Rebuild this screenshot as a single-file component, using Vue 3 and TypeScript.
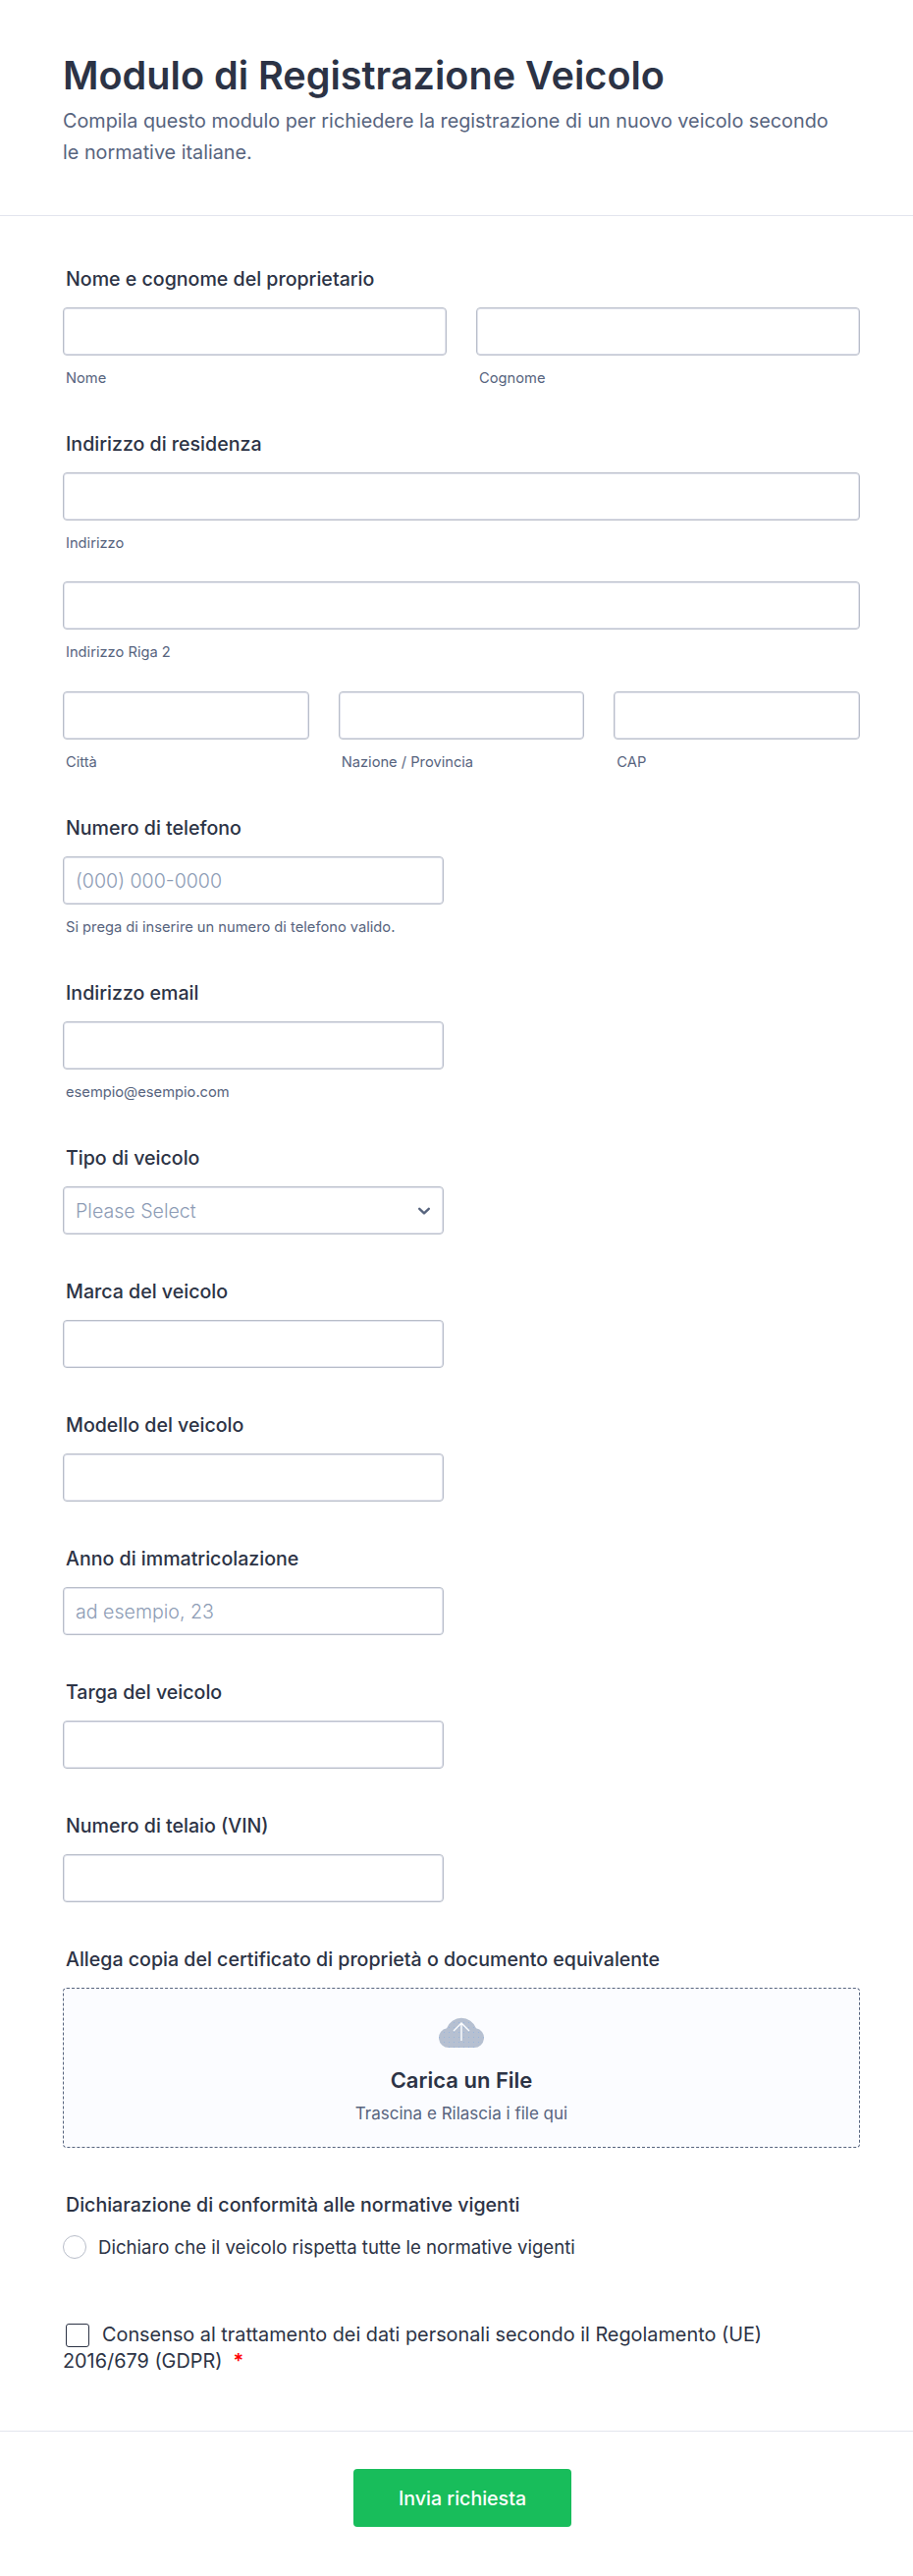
<template>
  <div class="form">
    <header class="form-header">
      <h1>Modulo di Registrazione Veicolo</h1>
      <p>Compila questo modulo per richiedere la registrazione di un nuovo veicolo secondo le normative italiane.</p>
    </header>

    <main class="form-body">
      <section class="field">
        <label class="label">Nome e cognome del proprietario</label>
        <div class="row two">
          <div>
            <input class="input" type="text" />
            <div class="sub">Nome</div>
          </div>
          <div>
            <input class="input" type="text" />
            <div class="sub">Cognome</div>
          </div>
        </div>
      </section>

      <section class="field">
        <label class="label">Indirizzo di residenza</label>
        <input class="input" type="text" />
        <div class="sub">Indirizzo</div>
        <input class="input stacked" type="text" />
        <div class="sub">Indirizzo Riga 2</div>
        <div class="row three stacked">
          <div v-for="part in addressParts" :key="part">
            <input class="input" type="text" />
            <div class="sub">{{ part }}</div>
          </div>
        </div>
      </section>

      <section class="field">
        <label class="label">Numero di telefono</label>
        <input class="input half" type="text" placeholder="(000) 000-0000" />
        <div class="sub">Si prega di inserire un numero di telefono valido.</div>
      </section>

      <section class="field">
        <label class="label">Indirizzo email</label>
        <input class="input half" type="text" />
        <div class="sub">esempio@esempio.com</div>
      </section>

      <section class="field">
        <label class="label">Tipo di veicolo</label>
        <div class="select half">
          <span>Please Select</span>
          <svg width="14" height="14" viewBox="0 0 14 14" fill="none">
            <path d="M2.2 4.800 7 9.400 11.800 4.800" stroke="#57647e" stroke-width="2.400" stroke-linecap="round" stroke-linejoin="round" />
          </svg>
        </div>
      </section>

      <section v-for="item in simpleFields" :key="item.label" class="field">
        <label class="label">{{ item.label }}</label>
        <input class="input half" type="text" :placeholder="item.placeholder" />
      </section>

      <section class="field">
        <label class="label">Allega copia del certificato di proprietà o documento equivalente</label>
        <div class="upload">
          <svg width="48" height="32" viewBox="0 0 48 32">
            <defs>
              <pattern id="cloud-dots" width="5" height="5" patternUnits="userSpaceOnUse">
                <rect width="5" height="5" fill="#b6c0d1" />
                <circle cx="1.500" cy="1.500" r="0.500" fill="#8fb2e0" />
              </pattern>
            </defs>
            <path d="M11 32A10 10 0 0 1 9 12.200A16 16 0 0 1 39 12.200A10 10 0 0 1 37 32Z" fill="url(#cloud-dots)" />
            <path d="M24 25V7M16 15 24 7l8 8" fill="none" stroke="#fbfcff" stroke-width="1.400" />
          </svg>
          <div class="upload-title">Carica un File</div>
          <div class="upload-hint">Trascina e Rilascia i file qui</div>
        </div>
      </section>

      <section class="field declaration">
        <label class="label">Dichiarazione di conformità alle normative vigenti</label>
        <div class="radio-row">
          <span class="radio"></span>
          <span>Dichiaro che il veicolo rispetta tutte le normative vigenti</span>
        </div>
      </section>

      <section class="consent">
        <div><span class="checkbox"></span><span>Consenso al trattamento dei dati personali secondo il Regolamento (UE)</span></div>
        <div><span>2016/679 (GDPR)</span><span class="required">*</span></div>
      </section>
    </main>

    <footer class="form-footer">
      <button class="submit" type="button">Invia richiesta</button>
    </footer>
  </div>
</template>

<script setup lang="ts">
interface SimpleField {
  label: string
  placeholder?: string
}

const addressParts: string[] = ['Città', 'Nazione / Provincia', 'CAP']

const simpleFields: SimpleField[] = [
  { label: 'Marca del veicolo' },
  { label: 'Modello del veicolo' },
  { label: 'Anno di immatricolazione', placeholder: 'ad esempio, 23' },
  { label: 'Targa del veicolo' },
  { label: 'Numero di telaio (VIN)' }
]
</script>

<style>
html,
body {
  background: #fff;
}
</style>

<style scoped>
.form {
  width: 930px;
  background: #fff;
  font-family: Inter, "Liberation Sans", sans-serif;
  color: #2c3345;
}

.form-header {
  height: 220px;
  box-sizing: border-box;
  padding: 53px 64px 0;
  border-bottom: 1px solid #e3e5ee;
}

.form-header h1 {
  margin: 0;
  font-size: 39.600px;
  line-height: 48px;
  font-weight: 600;
}

.form-header p {
  margin: 6px 16px 0 0;
  font-size: 19.800px;
  line-height: 32px;
  color: #57647e;
}

.form-body {
  padding: 52px 54px 57px 64px;
}

.field {
  margin-bottom: 46px;
}

.label {
  display: block;
  margin: 0 0 17px 3px;
  font-size: 19.600px;
  line-height: 24px;
  font-weight: 500;
}

.input {
  display: block;
  box-sizing: border-box;
  width: 100%;
  height: 49px;
  padding: 0 12px;
  font: 300 19.600px Inter, "Liberation Sans", sans-serif;
  color: #2c3345;
  background: #fff;
  border: 1px solid #b8bdc9;
  border-radius: 4px;
  box-shadow: 0 0 0 1px #e3e5ee inset;
  outline: none;
}

.input::placeholder {
  color: #8d9cb5;
  opacity: 1;
}

.half {
  width: 388px;
}

.stacked {
  margin-top: 30px;
}

.row.three.stacked {
  margin-top: 31px;
}

.row {
  display: grid;
  gap: 30px;
}

.row.two {
  grid-template-columns: 1fr 1fr;
}

.row.three {
  grid-template-columns: 1fr 1fr 1fr;
}

.sub {
  margin: 14px 0 0 3px;
  font-size: 14.700px;
  line-height: 18px;
  color: #57647e;
}

.select {
  display: flex;
  align-items: center;
  justify-content: space-between;
  box-sizing: border-box;
  height: 49px;
  padding: 0 12px;
  font-size: 19.600px;
  font-weight: 300;
  color: #8d9cb5;
  border: 1px solid #b8bdc9;
  border-radius: 4px;
  box-shadow: 0 0 0 1px #e3e5ee inset;
}

.upload {
  display: flex;
  flex-direction: column;
  align-items: center;
  box-sizing: border-box;
  height: 163px;
  padding-top: 28px;
  background: #fbfcff;
  border: 1px dashed #57647e;
  border-radius: 4px;
}

.upload-title {
  margin-top: 19px;
  font-size: 22px;
  line-height: 28px;
  font-weight: 600;
}

.upload-hint {
  margin-top: 10px;
  font-size: 17px;
  line-height: 20px;
  color: #57647e;
}

.declaration {
  margin-bottom: 64px;
}

.declaration .label {
  margin-bottom: 19px;
}

.radio-row {
  display: flex;
  align-items: center;
  gap: 12px;
  font-size: 18.600px;
  line-height: 24px;
}

.radio {
  box-sizing: border-box;
  width: 24px;
  height: 24px;
  border: 1.500px solid #b8bdc9;
  border-radius: 50%;
}

.consent {
  font-size: 19.850px;
  line-height: 27px;
}

.checkbox {
  display: inline-block;
  box-sizing: border-box;
  width: 24px;
  height: 24px;
  margin: 0 13px 0 3px;
  vertical-align: -6px;
  border: 1.500px solid #2c3345;
  border-radius: 3px;
}

.required {
  margin-left: 11px;
  color: #f00;
  font-weight: 600;
}

.form-footer {
  height: 147px;
  box-sizing: border-box;
  padding: 38px 0 0 12px;
  text-align: center;
  border-top: 1px solid #e3e5ee;
}

.submit {
  width: 222px;
  height: 59px;
  font: 500 19.600px Inter, "Liberation Sans", sans-serif;
  color: #fff;
  background: #18bd5b;
  border: none;
  border-radius: 4px;
}
</style>
